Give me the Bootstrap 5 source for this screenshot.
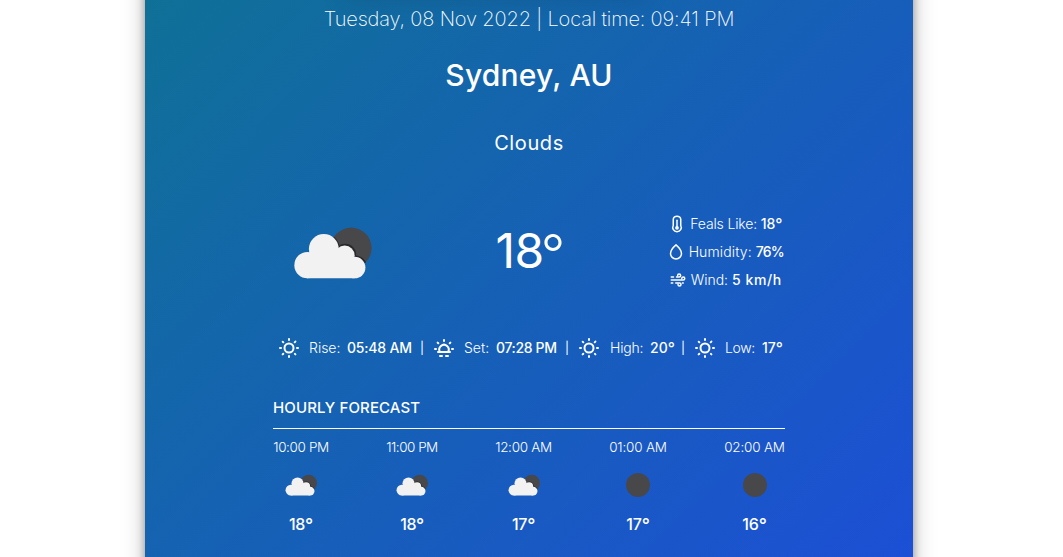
<!DOCTYPE html>
<html lang="en">
<head>
<meta charset="utf-8">
<meta name="viewport" content="width=device-width, initial-scale=1">
<title>Weather</title>
<link href="https://cdn.jsdelivr.net/npm/bootstrap@5.3.0/dist/css/bootstrap.min.css" rel="stylesheet">
<style>
body{font-family:Inter,"Open Sans",sans-serif;background:#fff;overflow:hidden}
.weather{width:768px;height:755px;margin:-142px 0 0 145px;padding:92px 128px 0;background:linear-gradient(to bottom right,#0e7490,#1d4ed8);box-shadow:0 20px 25px -5px #a3a3a3,0 8px 10px -6px #a3a3a3,0 0 8px #a3a3a3}
.search-box{width:316px;height:36px;margin:0 0 14px 64px;background:#fff;box-shadow:0 20px 25px -5px rgba(0,0,0,.1),0 8px 10px -6px rgba(0,0,0,.1)}
.today{font-size:20px;font-weight:240;line-height:28px;padding-top:5px;letter-spacing:-.15px}
.city{font-size:30px;font-weight:500;line-height:36px;margin-top:24px;letter-spacing:.2px}
.sky{font-size:20px;line-height:28px;margin-top:36px;letter-spacing:.6px}
.now{height:84px;margin-top:53px}
.now-icon{margin:0 10px 0 7px}
.temp{font-size:48px;line-height:48px;letter-spacing:-.5px;width:68px;margin-left:96px;margin-top:-2px}
.temp .deg{font-weight:300;vertical-align:-5px;margin-left:-3px}
.deg{font-size:1.12em;line-height:0;vertical-align:-1px}
.facts{font-size:14px;font-weight:340;width:120px;margin-left:102px}
.facts>div{height:28px}
.facts span,.sun>span,.sun b{position:relative;top:-1px}
.facts .deg,.sun .deg{top:0}
.facts b,.sun b{font-weight:550}
.facts svg{width:18px;height:18px;flex:none}
.sun{display:grid;grid-template-columns:32px 38px 73px 12px 32px 32px 69px 12px 33px 40px 31px 12px 32px 37px 30px;height:24px;margin:42px 0 0 4px;font-size:14px;font-weight:340}
.sun .bar{font-size:12px;font-weight:400;top:0}
.hourly-title{font-size:15px;font-weight:500;line-height:24px;margin-top:36px;letter-spacing:.12px}
.divider{height:1px;background:#fff;margin:8px 0}
.hour{font-size:13.5px;font-weight:340;line-height:20px}
.hour svg{width:48px;height:48px;margin:4px 0 3px}
.hour b{font-size:16px;font-weight:550;line-height:24px}
</style>
</head>
<body>
<svg width="0" height="0" class="position-absolute">
<clipPath id="night"><circle cx="71.5" cy="33" r="20.5"/></clipPath>
<symbol id="sun" viewBox="0 0 24 24"><path fill="#fff" d="M5.64,17l-.71.71a1,1,0,0,0,0,1.41,1,1,0,0,0,1.41,0l.71-.71A1,1,0,0,0,5.64,17ZM5,12a1,1,0,0,0-1-1H3a1,1,0,0,0,0,2H4A1,1,0,0,0,5,12Zm7-7a1,1,0,0,0,1-1V3a1,1,0,0,0-2,0V4A1,1,0,0,0,12,5ZM5.64,7.05a1,1,0,0,0,.7.29,1,1,0,0,0,.71-.29,1,1,0,0,0,0-1.41l-.71-.71A1,1,0,0,0,4.93,6.34Zm12,.29a1,1,0,0,0,.7-.29l.71-.71a1,1,0,1,0-1.41-1.41L17,5.64a1,1,0,0,0,0,1.41A1,1,0,0,0,17.66,7.34ZM21,11H20a1,1,0,0,0,0,2h1a1,1,0,0,0,0-2Zm-9,8a1,1,0,0,0-1,1v1a1,1,0,0,0,2,0V20A1,1,0,0,0,12,19ZM18.36,17A1,1,0,0,0,17,18.36l.71.71a1,1,0,0,0,1.41,0,1,1,0,0,0,0-1.41ZM12,6.5A5.5,5.5,0,1,0,17.5,12,5.51,5.51,0,0,0,12,6.5Zm0,9A3.5,3.5,0,1,1,15.5,12,3.5,3.5,0,0,1,12,15.5Z"/></symbol>
<symbol id="sunset" viewBox="0 0 24 24"><g fill="none" stroke="#fff" stroke-width="2" stroke-linecap="round"><path d="M12 4v1M3 13h1M20 13h1M5.6 6.6l.7.7M18.4 6.6l-.7.7M6 16h12M8 16a4.7 4.7 0 1 1 8 0M8 20h2M14 20h2"/></g></symbol>
<symbol id="cloud" viewBox="0 0 110 75"><circle cx="71.5" cy="33" r="20.5" fill="#48484a"/><g clip-path="url(#night)" fill="#29292b"><circle cx="44" cy="34" r="16"/><circle cx="65.5" cy="39.8" r="11"/><circle cx="75.5" cy="52.5" r="12"/></g><g fill="#f2f2f2"><circle cx="27.6" cy="50.2" r="13.2"/><circle cx="44" cy="34" r="15"/><circle cx="65" cy="40.5" r="10"/><circle cx="75" cy="52.6" r="10.8"/><path d="M27 38h34l14 10v15.4H27z"/></g></symbol>
<symbol id="moon" viewBox="0 0 48 48"><circle cx="24" cy="24" r="12" fill="#48484a"/></symbol>
</svg>
<main class="weather text-white">
<div class="search-box"></div>
<div class="today text-center">Tuesday, 08 Nov 2022 | Local time: 09:41 PM</div>
<div class="city text-center">Sydney, AU</div>
<div class="sky text-center">Clouds</div>
<section class="now d-flex align-items-center">
<svg class="now-icon" width="110" height="75"><use href="#cloud"/></svg>
<div class="temp text-nowrap">18<span class="deg">°</span></div>
<div class="facts text-nowrap">
<div class="d-flex align-items-center justify-content-center"><svg viewBox="0 0 24 24" fill="none" stroke="#fff" stroke-width="2" stroke-linecap="round"><path d="M7 6a5 4.5 0 0 1 10 0v8a5.7 5.7 0 1 1-10 0z"/><path d="M12 7v10"/><circle cx="12" cy="17" r="1.5"/></svg><span class="ms-1" style="letter-spacing:-.15px">Feals Like: <b>18<span class="deg">°</span></b></span></div>
<div class="d-flex align-items-center justify-content-center"><svg viewBox="0 0 24 24" fill="none" stroke="#fff" stroke-width="2"><path d="M12 2.5c4 3.5 7.3 7.5 7.3 11.5a7.3 7.3 0 0 1-14.6 0c0-4 3.3-8 7.3-11.5z"/></svg><span class="ms-1" style="letter-spacing:.12px">Humidity: <b style="letter-spacing:-.8px">76%</b></span></div>
<div class="d-flex align-items-center justify-content-center"><svg viewBox="0 0 24 24" fill="none" stroke="#fff" stroke-width="2" stroke-linecap="round"><path d="M3 8h3M10 8h3.5a2 2 0 1 0-2-2M3 12h16a2 2 0 1 0-2-2M3 16h2M9 16h5a2 2 0 1 1-2 2M18 16h1"/></svg><span class="ms-1">Wind: <b style="letter-spacing:.6px;top:0">5 km/h</b></span></div>
</div>
</section>
<section class="sun align-items-center text-nowrap">
<svg width="24" height="24"><use href="#sun"/></svg><span>Rise:</span><b style="letter-spacing:-.2px">05:48 AM</b><span class="bar">|</span>
<svg width="24" height="24"><use href="#sunset"/></svg><span>Set:</span><b style="letter-spacing:-.35px">07:28 PM</b><span class="bar">|</span>
<svg width="24" height="24"><use href="#sun"/></svg><span style="letter-spacing:-.2px">High:</span><b>20<span class="deg">°</span></b><span class="bar">|</span>
<svg width="24" height="24"><use href="#sun"/></svg><span style="letter-spacing:-.4px">Low:</span><b>17<span class="deg">°</span></b>
</section>
<div class="hourly-title">HOURLY FORECAST</div>
<div class="divider"></div>
<section class="d-flex justify-content-between text-nowrap">
<div class="hour d-flex flex-column align-items-center" style="width:56px;letter-spacing:-.37px"><span>10:00 PM</span><svg><use href="#cloud" x="2.7" y="8.8" width="44.6" height="30.4"/></svg><b>18<span class="deg">°</span></b></div>
<div class="hour d-flex flex-column align-items-center" style="width:52px;letter-spacing:-.5px"><span>11:00 PM</span><svg><use href="#cloud" x="2.7" y="8.8" width="44.6" height="30.4"/></svg><b>18<span class="deg">°</span></b></div>
<div class="hour d-flex flex-column align-items-center" style="width:57px;letter-spacing:-.3px"><span>12:00 AM</span><svg><use href="#cloud" x="2.7" y="8.8" width="44.6" height="30.4"/></svg><b>17<span class="deg">°</span></b></div>
<div class="hour d-flex flex-column align-items-center" style="width:58px;letter-spacing:-.2px"><span>01:00 AM</span><svg><use href="#moon"/></svg><b>17<span class="deg">°</span></b></div>
<div class="hour d-flex flex-column align-items-center" style="width:61px;letter-spacing:-.2px"><span>02:00 AM</span><svg><use href="#moon"/></svg><b>16<span class="deg">°</span></b></div>
</section>
</main>
</body>
</html>
